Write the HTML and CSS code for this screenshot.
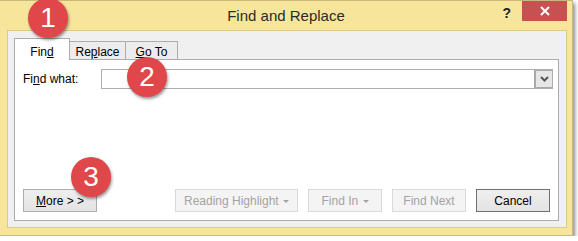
FILE: index.html
```html
<!DOCTYPE html>
<html lang="en">
<head>
  <meta charset="UTF-8">
  <title>Find and Replace</title>
  <link rel="stylesheet" href="styles.css">
</head>
<body>

  <div class="window">
    <!-- Title bar -->
    <div class="titlebar">
      <div></div>
      <div class="title">Find and Replace</div>
      <div class="controls">
        <span class="help">?</span>
        <span class="close">
          <svg width="10" height="10" viewBox="0 0 10 10"><path d="M1 1 L9 9 M9 1 L1 9" stroke="#fff" stroke-width="2"/></svg>
        </span>
      </div>
    </div>

    <!-- Dialog body -->
    <div class="client">
      <div class="tabs">
        <div class="tab active">Fin<u>d</u></div>
        <div class="tab">Re<u>p</u>lace</div>
        <div class="tab"><u>G</u>o To</div>
      </div>

      <div class="panel">
        <div class="field">
          <span class="label">Fi<u>n</u>d what:</span>
          <div class="combo">
            <span class="combo-btn">
              <svg width="9" height="6" viewBox="0 0 9 6"><path d="M1 1 L4.5 4.5 L8 1" fill="none" stroke="#555" stroke-width="2"/></svg>
            </span>
          </div>
        </div>

        <div class="actions">
          <button class="btn"><u>M</u>ore &gt; &gt;</button>
          <div class="actions-right">
            <button class="btn disabled wide">Reading Highlight <span class="caret"></span></button>
            <button class="btn disabled">Find In <span class="caret"></span></button>
            <button class="btn disabled">Find Next</button>
            <button class="btn cancel">Cancel</button>
          </div>
        </div>
      </div>
    </div>

    <!-- Numbered callouts -->
    <span class="badge badge1">1</span>
    <span class="badge badge2">2</span>
    <span class="badge badge3">3</span>
  </div>

</body>
</html>
```

FILE: styles.css
```css
body {
  margin: 0;
  padding: 0;
  background: #fff;
  font-family: 'Liberation Sans', Arial, sans-serif;
  font-size: 12px;
  color: #000;
  overflow: hidden;
}

/* Window frame */
.window {
  position: relative;
  width: 573px;
  height: 236px;
  box-sizing: border-box;
  background: #f7e59c;
  border-top: 1px solid #c9b97c;
  border-right: 1px solid #c9b97c;
  border-bottom: 1px solid #c9b97c;
  box-shadow: 2px 3px 4px rgba(0, 0, 0, 0.45);
}

.titlebar {
  height: 29px;
  display: grid;
  grid-template-columns: 1fr auto 1fr;
}

.title {
  font-size: 15px;
  color: #2a2a2a;
  padding-top: 6px;
}

.controls {
  display: flex;
  justify-content: flex-end;
  align-items: flex-start;
}

.help {
  font-weight: bold;
  font-size: 14px;
  color: #222;
  margin-top: 4px;
  margin-right: 11px;
}

.close {
  width: 45px;
  height: 20px;
  background: #c75050;
  display: flex;
  align-items: center;
  justify-content: center;
  margin-right: 5px;
}

/* Client area */
.client {
  height: 198px;
  box-sizing: border-box;
  margin: 0 5px 0 7px;
  background: #f0f0f0;
  border: 1px solid #dccb88;
  padding: 7px 7px 6px 6px;
  display: flex;
  flex-direction: column;
}

.tabs {
  display: flex;
  align-items: flex-end;
  height: 21px;
}

.tab {
  height: 18px;
  box-sizing: border-box;
  border: 1px solid #acacac;
  border-left: none;
  border-bottom: none;
  background: #ececec;
  text-align: center;
  padding-top: 3px;
  line-height: 14px;
}

.tab:nth-child(2) {
  width: 56px;
}

.tab:nth-child(3) {
  width: 52px;
}

.tab.active {
  width: 56px;
  height: 22px;
  margin-bottom: -1px;
  border-left: 1px solid #acacac;
  background: #fff;
  padding-top: 6px;
  position: relative;
  z-index: 1;
}

.panel {
  flex: 1;
  background: #fff;
  border: 1px solid #acacac;
  padding: 9px 5px 8px 8px;
  display: flex;
  flex-direction: column;
}

.field {
  display: flex;
  align-items: center;
}

.label {
  width: 78px;
  line-height: 20px;
}

.combo {
  flex: 1;
  height: 20px;
  box-sizing: border-box;
  border: 1px solid #abadb3;
  display: flex;
  justify-content: flex-end;
}

.combo-btn {
  width: 18px;
  height: 18px;
  box-sizing: border-box;
  background: #e6e6e6;
  border: 2px solid #a9a9a9;
  border-top: 1px solid #a9a9a9;
  border-right: none;
  border-bottom: 1px solid #a9a9a9;
  display: flex;
  align-items: center;
  justify-content: center;
}

/* Bottom buttons */
.actions {
  margin-top: auto;
  margin-right: 3px;
  display: flex;
}

.actions-right {
  margin-left: auto;
  display: flex;
  gap: 10px;
}

.btn {
  width: 74px;
  height: 23px;
  box-sizing: border-box;
  font-family: inherit;
  font-size: 12px;
  color: #000;
  background: linear-gradient(#efefef, #e3e3e3);
  border: 1px solid #adadad;
  padding: 0;
}

.btn.wide {
  width: 123px;
}

.btn.disabled {
  background: #f4f4f4;
  border-color: #d9d9d9;
  color: #a3a3a3;
}

.btn.cancel {
  border-color: #707070;
}

.caret {
  display: inline-block;
  vertical-align: middle;
  border-left: 3px solid transparent;
  border-right: 3px solid transparent;
  border-top: 3px solid #a3a3a3;
  margin-left: 1px;
}

/* Callouts */
.badge {
  position: absolute;
  width: 40px;
  height: 40px;
  border-radius: 50%;
  background: #e0474a;
  color: #fff;
  font-size: 28px;
  line-height: 40px;
  text-align: center;
  box-shadow: 1px 2px 3px rgba(0, 0, 0, 0.4);
  z-index: 5;
}

.badge1 {
  left: 28px;
  top: -3px;
}

.badge2 {
  left: 127px;
  top: 56px;
}

.badge3 {
  left: 71px;
  top: 156px;
}
```
